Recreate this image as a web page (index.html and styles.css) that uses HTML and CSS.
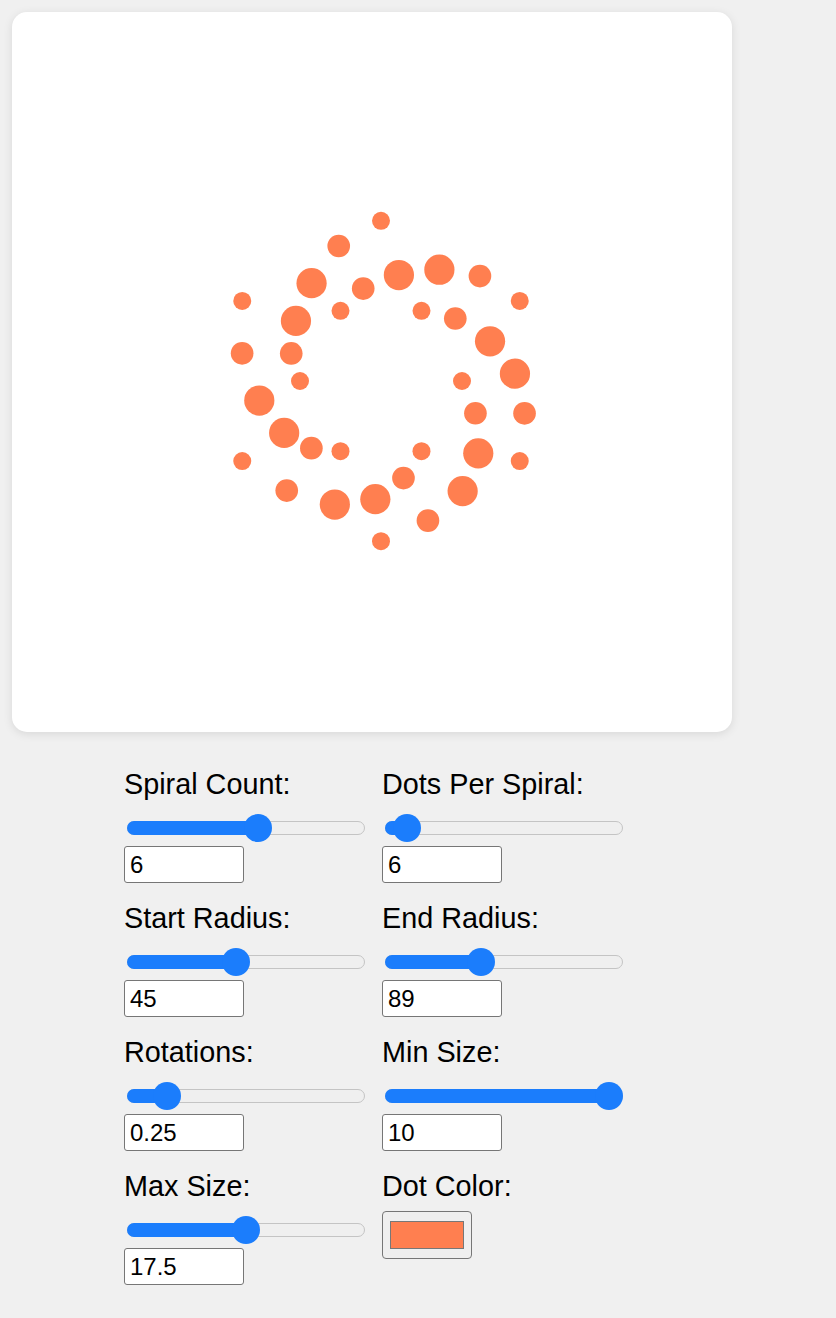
FILE: index.html
```html
<!DOCTYPE html>
<html lang="en">
<head>
<meta charset="utf-8">
<title>Spiral Dots</title>
<link rel="stylesheet" href="styles.css">
</head>
<body>
<main class="app">
  <div class="card">
    <svg class="art" width="720" height="720" viewBox="0 0 720 720">
      <g transform="translate(360 360)" fill="#ff7f50">
        <circle cx="90" cy="9" r="9"/>
        <circle cx="49.5" cy="79.15" r="9"/>
        <circle cx="-31.5" cy="79.15" r="9"/>
        <circle cx="-72" cy="9" r="9"/>
        <circle cx="-31.5" cy="-61.15" r="9"/>
        <circle cx="49.5" cy="-61.15" r="9"/>

        <circle cx="103.43" cy="41.26" r="11.33"/>
        <circle cx="31.46" cy="106.05" r="11.33"/>
        <circle cx="-60.64" cy="76.13" r="11.33"/>
        <circle cx="-80.77" cy="-18.6" r="11.33"/>
        <circle cx="-8.8" cy="-83.39" r="11.33"/>
        <circle cx="83.3" cy="-53.47" r="11.33"/>

        <circle cx="106.27" cy="81.34" r="15.11"/>
        <circle cx="3.33" cy="127.17" r="15.11"/>
        <circle cx="-87.83" cy="60.94" r="15.11"/>
        <circle cx="-76.05" cy="-51.12" r="15.11"/>
        <circle cx="26.89" cy="-96.95" r="15.11"/>
        <circle cx="118.05" cy="-30.72" r="15.11"/>

        <circle cx="90.65" cy="119.09" r="15.11"/>
        <circle cx="-37.16" cy="132.52" r="15.11"/>
        <circle cx="-112.71" cy="28.54" r="15.11"/>
        <circle cx="-60.43" cy="-88.87" r="15.11"/>
        <circle cx="67.38" cy="-102.3" r="15.11"/>
        <circle cx="142.93" cy="1.68" r="15.11"/>

        <circle cx="55.94" cy="148.62" r="11.33"/>
        <circle cx="-85.27" cy="118.61" r="11.33"/>
        <circle cx="-129.88" cy="-18.68" r="11.33"/>
        <circle cx="-33.28" cy="-125.96" r="11.33"/>
        <circle cx="107.93" cy="-95.95" r="11.33"/>
        <circle cx="152.54" cy="41.34" r="11.33"/>

        <circle cx="9" cy="169.2" r="9"/>
        <circle cx="-129.74" cy="89.1" r="9"/>
        <circle cx="-129.74" cy="-71.1" r="9"/>
        <circle cx="9" cy="-151.2" r="9"/>
        <circle cx="147.74" cy="-71.1" r="9"/>
        <circle cx="147.74" cy="89.1" r="9"/>
      </g>
    </svg>
  </div>

  <div class="controls">
    <div class="control">
      <label class="label">Spiral Count:</label>
      <div class="slider" style="--v:0.556"><div class="track"></div><span class="fill"></span><span class="thumb"></span></div>
      <input class="num" type="text" value="6">
    </div>
    <div class="control">
      <label class="label">Dots Per Spiral:</label>
      <div class="slider" style="--v:0.04"><div class="track"></div><span class="fill"></span><span class="thumb"></span></div>
      <input class="num" type="text" value="6">
    </div>
    <div class="control">
      <label class="label">Start Radius:</label>
      <div class="slider" style="--v:0.45"><div class="track"></div><span class="fill"></span><span class="thumb"></span></div>
      <input class="num" type="text" value="45">
    </div>
    <div class="control">
      <label class="label">End Radius:</label>
      <div class="slider" style="--v:0.39"><div class="track"></div><span class="fill"></span><span class="thumb"></span></div>
      <input class="num" type="text" value="89">
    </div>
    <div class="control">
      <label class="label">Rotations:</label>
      <div class="slider" style="--v:0.125"><div class="track"></div><span class="fill"></span><span class="thumb"></span></div>
      <input class="num" type="text" value="0.25">
    </div>
    <div class="control">
      <label class="label">Min Size:</label>
      <div class="slider" style="--v:1"><div class="track"></div><span class="fill"></span><span class="thumb"></span></div>
      <input class="num" type="text" value="10">
    </div>
    <div class="control">
      <label class="label">Max Size:</label>
      <div class="slider" style="--v:0.5"><div class="track"></div><span class="fill"></span><span class="thumb"></span></div>
      <input class="num" type="text" value="17.5">
    </div>
    <div class="control control--color">
      <label class="label">Dot Color:</label>
      <input class="color" type="color" value="#ff7f50">
    </div>
  </div>
</main>
</body>
</html>
```

FILE: styles.css
```css
html, body {
  margin: 0;
  padding: 0;
}

body {
  background: #f0f0f0;
  font-family: "Liberation Sans", Arial, Helvetica, sans-serif;
  color: #000;
  padding: 12px 12px 33px;
}

.app {
  width: 720px;
}

.card {
  width: 720px;
  height: 720px;
  background: #ffffff;
  border-radius: 15px;
  box-shadow: 0 2px 10px rgba(0, 0, 0, 0.1);
  overflow: hidden;
}

.art {
  display: block;
}

.controls {
  margin: 36px 0 0 112px;
  display: grid;
  grid-template-columns: 240px 240px;
  column-gap: 18px;
  row-gap: 19px;
}

.control {
  display: flex;
  flex-direction: column;
  align-items: flex-start;
}

.label {
  display: block;
  font-size: 28.8px;
  line-height: 32px;
  margin-bottom: 14px;
}

.control--color .label {
  margin-bottom: 9px;
}

.slider {
  position: relative;
  width: 238px;
  height: 28px;
  margin-left: 3px;
  display: flex;
  align-items: center;
}

.track {
  width: 100%;
  height: 14px;
  box-sizing: border-box;
  border: 1px solid #c4c4c4;
  border-radius: 7px;
  background: #efefef;
}

.fill {
  position: absolute;
  left: 0;
  top: 7px;
  height: 14px;
  border-radius: 7px;
  background: #1b7dfc;
  width: calc(var(--v) * (100% - 28px) + 14px);
}

.thumb {
  position: absolute;
  top: 0;
  left: calc(var(--v) * (100% - 28px));
  width: 28px;
  height: 28px;
  border-radius: 50%;
  background: #1b7dfc;
}

.num {
  margin: 4px 0 0;
  width: 120px;
  height: 37px;
  box-sizing: border-box;
  border: 1px solid #767676;
  border-radius: 3px;
  background: #fff;
  padding: 0 5px;
  font-family: "Liberation Sans", Arial, Helvetica, sans-serif;
  font-size: 24px;
  color: #000;
  outline: none;
}

.color {
  -webkit-appearance: none;
  appearance: none;
  margin: 0;
  width: 90px;
  height: 48px;
  box-sizing: border-box;
  border: 1px solid #767676;
  border-radius: 4px;
  background: #efefef;
  padding: 0;
  cursor: pointer;
}

.color::-webkit-color-swatch-wrapper {
  padding: 9px 7px;
}

.color::-webkit-color-swatch {
  border: 1px solid #777;
  border-radius: 0;
}
```
